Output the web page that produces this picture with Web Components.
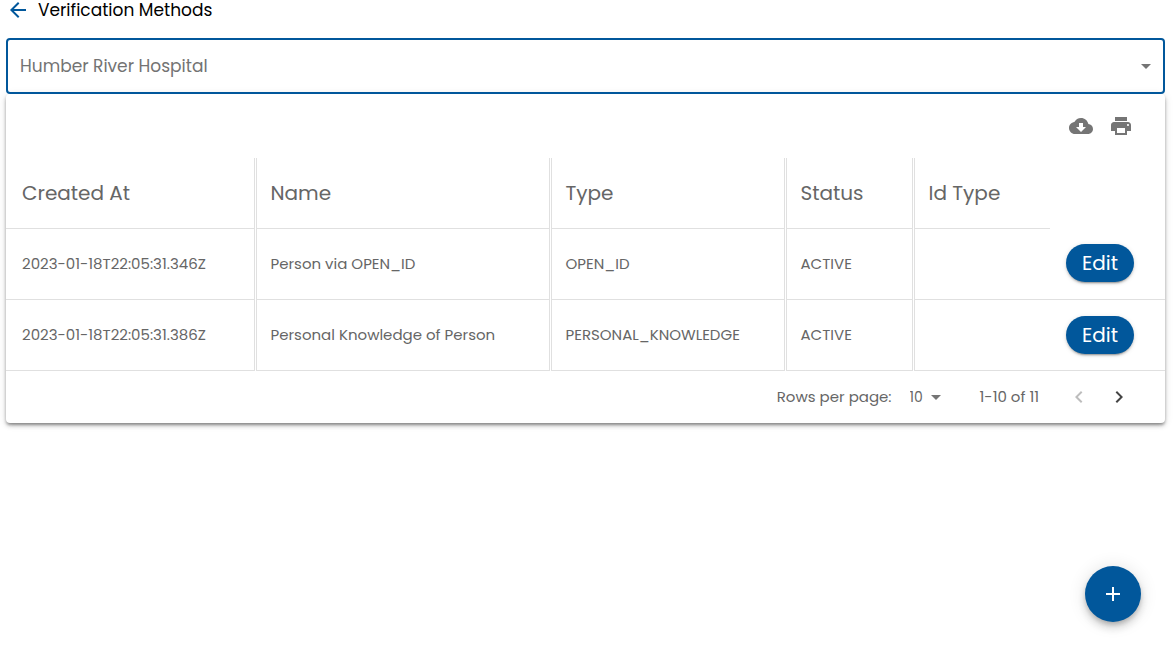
<!DOCTYPE html>
<html lang="en">
<head>
<meta charset="utf-8">
<meta name="viewport" content="width=device-width, initial-scale=1">
<title>Verification Methods</title>
<style>
  body {
    --primary: #01579b;
    --text: #666;
    --icon: #757575;
    --line: #e0e0e0;
    margin: 0;
    background: #fff;
    color: var(--text);
    font: 15px/20px Poppins, Inter, sans-serif;
  }
</style>
</head>
<body>
<vm-page>
  <vm-heading slot="heading" href="#back">Verification Methods</vm-heading>
  <vm-select slot="filter" label="Organization" value="Humber River Hospital"></vm-select>
  <vm-card>
    <vm-icon-button slot="tools" icon="cloud" label="Download"></vm-icon-button>
    <vm-icon-button slot="tools" icon="print" label="Print"></vm-icon-button>
    <vm-table></vm-table>
    <vm-pagination slot="footer"></vm-pagination>
  </vm-card>
  <vm-fab slot="action" label="Add verification method"></vm-fab>
</vm-page>

<script>
const ICONS = {
  back: 'M20 11H7.83l5.59-5.59L12 4l-8 8 8 8 1.41-1.41L7.83 13H20v-2z',
  cloud: 'M19.35 10.04C18.67 6.59 15.64 4 12 4 9.11 4 6.6 5.64 5.35 8.04 2.34 8.36 0 10.91 0 14c0 3.31 2.69 6 6 6h13c2.76 0 5-2.24 5-5 0-2.64-2.05-4.78-4.65-4.96zM17 13l-5 5-5-5h3V9h4v4h3z',
  print: 'M19 8H5c-1.66 0-3 1.34-3 3v6h4v4h12v-4h4v-6c0-1.66-1.34-3-3-3zm-3 11H8v-5h8v5zm3-7c-.55 0-1-.45-1-1s.45-1 1-1 1 .45 1 1-.45 1-1 1zm-1-9H6v4h12V3z',
  caret: 'M7 10l5 5 5-5z',
  left: 'M15.41 16.59L10.83 12l4.58-4.59L14 6l-6 6 6 6z',
  right: 'M8.59 16.59L13.17 12 8.59 7.41 10 6l6 6-6 6z',
  add: 'M19 13h-6v6h-2v-6H5v-2h6V5h2v6h6v2z'
};

class VmElement extends HTMLElement {
  connectedCallback() {
    if (this.shadowRoot) return;
    this.attachShadow({ mode: 'open' }).innerHTML = this.render();
  }
}

customElements.define('vm-icon', class extends VmElement {
  render() {
    return `<style>
      :host { display: inline-block; width: 24px; height: 24px; flex: none; }
      svg { display: block; width: 100%; height: 100%; fill: currentColor; }
    </style><svg viewBox="0 0 24 24" aria-hidden="true"><path d="${ICONS[this.getAttribute('name')]}"/></svg>`;
  }
});

customElements.define('vm-page', class extends VmElement {
  render() {
    return `<style>
      :host { display: block; box-sizing: border-box; min-height: 100vh; padding: 0 10px 0 6px; }
      header { margin-bottom: 18px; }
    </style>
    <header><slot name="heading"></slot></header>
    <main><slot name="filter"></slot><slot></slot></main>
    <slot name="action"></slot>`;
  }
});

customElements.define('vm-heading', class extends VmElement {
  render() {
    return `<style>
      :host { display: flex; align-items: center; gap: 8px; height: 20px; color: #000; }
      a { display: flex; color: var(--primary); }
      h1 { margin: 0; font-size: 17px; line-height: 20px; font-weight: 400; }
    </style>
    <a href="${this.getAttribute('href')}" aria-label="Back"><vm-icon name="back"></vm-icon></a>
    <h1><slot></slot></h1>`;
  }
});

customElements.define('vm-select', class extends VmElement {
  render() {
    return `<style>
      :host { display: grid; align-items: center; }
      select {
        grid-area: 1 / 1; appearance: none; box-sizing: border-box; width: 100%; height: 56px;
        padding: 0 40px 0 12px; border: 2px solid var(--primary); border-radius: 4px;
        outline: 0; background: none; color: #737373; font: inherit; font-size: 17px; line-height: 24px;
      }
      vm-icon { grid-area: 1 / 1; justify-self: end; margin-right: 7px; color: var(--icon); pointer-events: none; }
    </style>
    <select aria-label="${this.getAttribute('label')}"><option>${this.getAttribute('value')}</option></select>
    <vm-icon name="caret"></vm-icon>`;
  }
});

customElements.define('vm-card', class extends VmElement {
  render() {
    return `<style>
      :host {
        display: block; border-radius: 4px;
        box-shadow: 0 3px 3px -2px rgba(0,0,0,.2), 0 3px 4px 0 rgba(0,0,0,.14), 0 1px 8px 0 rgba(0,0,0,.12), 0 2px 3px rgba(0,0,0,.2);
      }
      .tools { display: flex; justify-content: flex-end; align-items: center; height: 64px; padding: 0 24px; }
    </style>
    <div class="tools"><slot name="tools"></slot></div>
    <slot></slot>
    <slot name="footer"></slot>`;
  }
});

customElements.define('vm-icon-button', class extends VmElement {
  render() {
    const off = this.hasAttribute('disabled') ? 'disabled' : '';
    return `<style>
      :host { display: block; color: var(--icon); }
      button { display: block; padding: 8px; border: 0; border-radius: 50%; background: none; color: inherit; }
      button:disabled { color: #bdbdbd; }
      vm-icon { display: block; }
    </style>
    <button type="button" aria-label="${this.getAttribute('label')}" ${off}><vm-icon name="${this.getAttribute('icon')}"></vm-icon></button>`;
  }
});

customElements.define('vm-button', class extends VmElement {
  render() {
    return `<style>
      :host { display: block; }
      button {
        display: block; height: 38px; padding: 0 16px; border: 0; border-radius: 20px;
        background: var(--primary); color: #fff; font: inherit; font-size: 20px; line-height: 38px;
        box-shadow: 0 3px 1px -2px rgba(0,0,0,.2), 0 2px 2px 0 rgba(0,0,0,.14), 0 1px 5px 0 rgba(0,0,0,.12);
      }
    </style><button type="button"><slot></slot></button>`;
  }
});

customElements.define('vm-table', class extends VmElement {
  render() {
    const rows = [
      ['2023-01-18T22:05:31.346Z', 'Person via OPEN_ID', 'OPEN_ID', 'ACTIVE', ''],
      ['2023-01-18T22:05:31.386Z', 'Personal Knowledge of Person', 'PERSONAL_KNOWLEDGE', 'ACTIVE', '']
    ];
    const heads = ['Created At', 'Name', 'Type', 'Status', 'Id Type'];
    const widths = [249, 295, 235, 128, 137, 115];
    return `<style>
      :host { display: block; }
      table { width: 100%; table-layout: fixed; border-collapse: collapse; }
      th, td { box-sizing: border-box; height: 71px; padding: 0 0 0 14px; border-bottom: 1px solid var(--line); text-align: left; white-space: nowrap; }
      th:first-child, td:first-child { padding-left: 16px; }
      th { height: 70px; font-size: 20px; line-height: 24px; font-weight: 400; }
      th:nth-child(-n+4), td:nth-child(-n+4) { border-right: 3px double var(--line); }
      thead td { height: 70px; border: 0; }
      td:last-child { padding-left: 16px; }
    </style>
    <table>
      <colgroup>${widths.map(w => `<col style="width:${w}px">`).join('')}</colgroup>
      <thead><tr>${heads.map(h => `<th scope="col">${h}</th>`).join('')}<td></td></tr></thead>
      <tbody>${rows.map(r => `<tr>${r.map(c => `<td>${c}</td>`).join('')}<td><vm-button>Edit</vm-button></td></tr>`).join('')}</tbody>
    </table>`;
  }
});

customElements.define('vm-pagination', class extends VmElement {
  render() {
    return `<style>
      :host { display: flex; justify-content: flex-end; align-items: center; height: 52px; padding-right: 26px; }
      .size { display: grid; align-items: center; width: 38px; margin: 0 32px 0 18px; }
      select { grid-area: 1 / 1; appearance: none; width: 38px; height: 24px; margin: 0; padding: 0; border: 0; background: none; color: inherit; font: inherit; font-size: 14px; }
      .size vm-icon { grid-area: 1 / 1; justify-self: end; color: var(--icon); pointer-events: none; }
      nav { display: flex; margin-left: 20px; }
      .next { color: #444; }
    </style>
    <label for="rows">Rows per page:</label>
    <div class="size"><select id="rows"><option>10</option></select><vm-icon name="caret"></vm-icon></div>
    <span>1-10 of 11</span>
    <nav aria-label="Pages">
      <vm-icon-button icon="left" label="Previous page" disabled></vm-icon-button>
      <vm-icon-button class="next" icon="right" label="Next page"></vm-icon-button>
    </nav>`;
  }
});

customElements.define('vm-fab', class extends VmElement {
  render() {
    return `<style>
      :host { display: block; position: fixed; right: 34px; bottom: 35px; }
      button {
        display: grid; place-items: center; width: 56px; height: 56px; padding: 0; border: 0; border-radius: 50%;
        background: var(--primary); color: #fff;
        box-shadow: 0 3px 5px -1px rgba(0,0,0,.2), 0 6px 10px 0 rgba(0,0,0,.14), 0 1px 18px 0 rgba(0,0,0,.12);
      }
    </style><button type="button" aria-label="${this.getAttribute('label')}"><vm-icon name="add"></vm-icon></button>`;
  }
});
</script>
</body>
</html>
